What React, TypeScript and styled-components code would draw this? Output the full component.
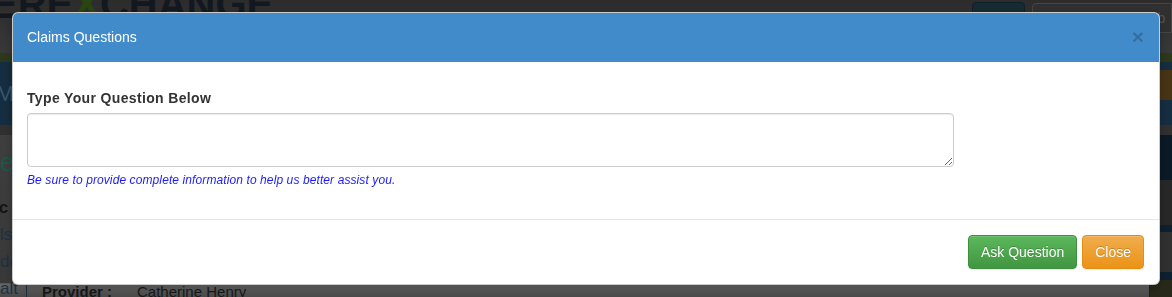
import React from "react";
import styled, { createGlobalStyle } from "styled-components";

const Global = createGlobalStyle`
  html, body { margin: 0; padding: 0; }
  body {
    width: 1172px;
    height: 297px;
    overflow: hidden;
    font-family: "Liberation Sans", Arial, Helvetica, sans-serif;
    font-size: 14px;
    line-height: 1.42857;
    color: #333;
    background: #3a3a3a;
  }
  * { box-sizing: border-box; }
`;

/* ---------- background page (dimmed) ---------- */
const Page = styled.div`
  width: 1172px;
  height: 297px;
  display: flex;
  flex-direction: column;
  overflow: hidden;
`;

const TopBar = styled.header`
  height: 53px;
  flex: none;
  display: flex;
  align-items: flex-start;
  justify-content: space-between;
  background: linear-gradient(#2f2f2f, #3b3b3b);
  overflow: hidden;
`;

const Logo = styled.div`
  font-family: "Liberation Sans", Arial, sans-serif;
  font-weight: 700;
  font-size: 40px;
  letter-spacing: 0;
  line-height: 1;
  margin-top: -16px;
  margin-left: -9px;
  color: #151a22;
`;

const LogoX = styled.span`
  color: #2c4a12;
`;

const TopRight = styled.div`
  display: flex;
  gap: 7px;
  padding-top: 2px;
`;

const DarkBtn = styled.div`
  width: 53px;
  height: 30px;
  border-radius: 4px;
  background: #172d36;
  border: 1px solid #10222a;
`;

const SearchBox = styled.div`
  width: 140px;
  height: 30px;
  margin-top: 1px;
  border: 1px solid #4a4a4a;
  border-radius: 4px 0 0 4px;
  background: #333;
  color: #5a5a5a;
  font-size: 14px;
  padding: 5px 0 0 95px;
  white-space: nowrap;
  overflow: hidden;
`;

const GreenStrip = styled.div`
  height: 9px;
  flex: none;
  background: #2f3b1c;
`;

const Nav = styled.nav`
  height: 63px;
  flex: none;
  display: flex;
  justify-content: space-between;
  background: #173044;
  color: #3d5a70;
  font-size: 22px;
`;

const NavItem = styled.div`
  padding: 16px 0 0 0;
  margin-left: -4px;
`;

const NavTab = styled.div`
  width: 60px;
  margin-top: 8px;
  height: 30px;
  background: #4a3716;
  color: #6a5430;
  padding: 2px 0 0 6px;
`;

const Gap = styled.div`
  height: 10px;
  flex: none;
  background: #333;
`;

const Content = styled.main`
  flex: 1;
  min-height: 0;
  overflow: hidden;
  display: flex;
  background: linear-gradient(#424242 0%, #3c3c3c 91%, #6e6e6e 92%, #4c4c4c 100%);
`;

const SideCol = styled.div`
  width: 27px;
  flex: none;
  border-right: 1px solid #1d3448;
  color: #203446;
  font-size: 17px;
  line-height: 1;
  display: flex;
  flex-direction: column;
  gap: 10px;
  padding-top: 14px;
  overflow: hidden;
  white-space: nowrap;
`;

const SideHead = styled.div`
  color: #1f5a4a;
  font-size: 26px;
  margin-bottom: 14px;
`;

const SideBold = styled.div`
  font-weight: 700;
  color: #151515;
  margin-left: -6px;
`;

const MainCol = styled.div`
  flex: 1;
  display: flex;
  flex-direction: column;
  justify-content: flex-end;
  padding: 0 0 0 15px;
`;

const InfoRow = styled.div`
  display: flex;
  color: #1a1a1a;
  font-size: 15px;
  line-height: 1;
  margin-bottom: -2px;
`;

const InfoLabel = styled.span`
  font-weight: 700;
  width: 95px;
`;

const RightRail = styled.div`
  width: 23px;
  flex: none;
  border-left: 1px solid #102536;
  display: flex;
  flex-direction: column;
`;

const RailBlock = styled.div<{ $h: number; $bg: string }>`
  height: ${(p) => p.$h}px;
  flex: none;
  background: ${(p) => p.$bg};
`;

/* ---------- modal ---------- */
const Overlay = styled.div`
  position: fixed;
  inset: 0;
  padding: 12px 12px 0 12px;
  background: rgba(0, 0, 0, 0.05);
`;

const Dialog = styled.div`
  width: 1148px;
  background: #fff;
  border: 1px solid rgba(0, 0, 0, 0.2);
  border-radius: 6px;
  box-shadow: 0 3px 8px rgba(0, 0, 0, 0.25);
  overflow: hidden;
  display: flex;
  flex-direction: column;
`;

const Header = styled.div`
  height: 50px;
  background: #428bca;
  display: flex;
  align-items: center;
  justify-content: space-between;
  padding: 0 15px 0 14px;
  margin-top: -1px;
`;

const Title = styled.h4`
  margin: 0;
  font-weight: 400;
  font-size: 14px;
  color: #fff;
  line-height: 20px;
`;

const CloseX = styled.button`
  border: 0;
  background: none;
  padding: 0;
  margin-top: -2px;
  font-family: "Liberation Sans", Arial, sans-serif;
  font-size: 21px;
  font-weight: 700;
  line-height: 1;
  color: #000;
  opacity: 0.2;
  cursor: pointer;
`;

const Body = styled.div`
  padding: 26px 14px 30px 14px;
  display: flex;
  flex-direction: column;
`;

const Label = styled.label`
  font-weight: 700;
  font-size: 14px;
  letter-spacing: 0.35px;
  color: #333;
  line-height: 20px;
  margin-bottom: 5px;
`;

const TextArea = styled.textarea`
  width: 927px;
  height: 54px;
  margin: 0;
  padding: 6px 12px;
  border: 1px solid #ccc;
  border-radius: 4px;
  box-shadow: inset 0 1px 1px rgba(0, 0, 0, 0.075);
  font-family: inherit;
  font-size: 14px;
  resize: vertical;
  display: block;
`;

const Help = styled.span`
  margin-top: 5px;
  font-size: 12px;
  letter-spacing: 0.1px;
  line-height: 17px;
  font-style: italic;
  color: #1a1aff;
`;

const Footer = styled.div`
  border-top: 1px solid #e5e5e5;
  padding: 15px;
  display: flex;
  justify-content: flex-end;
  gap: 5px;
`;

const Btn = styled.button<{ $variant: "success" | "warning" }>`
  height: 34px;
  padding: 6px 12px;
  font-family: inherit;
  font-size: 14px;
  line-height: 20px;
  color: #fff;
  border-radius: 4px;
  text-shadow: 0 -1px 0 rgba(0, 0, 0, 0.2);
  box-shadow: inset 0 1px 0 rgba(255, 255, 255, 0.15), 0 1px 1px rgba(0, 0, 0, 0.075);
  cursor: pointer;
  background: ${(p) =>
    p.$variant === "success"
      ? "linear-gradient(#5cb85c, #419641)"
      : "linear-gradient(#f0ad4e, #eb9316)"};
  border: 1px solid ${(p) => (p.$variant === "success" ? "#3e8f3e" : "#e38d13")};
`;

export default function App() {
  return (
    <>
      <Global />
      <Page>
        <TopBar>
          <Logo>
            ERE<LogoX>X</LogoX>CHANGE
          </Logo>
          <TopRight>
            <DarkBtn />
            <SearchBox>Numb</SearchBox>
          </TopRight>
        </TopBar>
        <GreenStrip />
        <Nav>
          <NavItem>My</NavItem>
          <NavTab>C</NavTab>
        </Nav>
        <Gap />
        <Content>
          <SideCol>
            <SideHead>eH</SideHead>
            <SideBold>ic</SideBold>
            <div>ls</div>
            <div>de</div>
            <div>alt</div>
          </SideCol>
          <MainCol>
            <InfoRow>
              <InfoLabel>Provider :</InfoLabel>
              <span>Catherine Henry</span>
            </InfoRow>
          </MainCol>
          <RightRail>
            <RailBlock $h={45} $bg="#0b1b29" />
            <RailBlock $h={45} $bg="#2a2a2a" />
            <RailBlock $h={7} $bg="#0e2234" />
            <RailBlock $h={40} $bg="#333" />
            <RailBlock $h={8} $bg="#0e2234" />
            <RailBlock $h={30} $bg="#2a2a1c" />
          </RightRail>
        </Content>
      </Page>
      <Overlay>
        <Dialog role="dialog" aria-labelledby="cq-title">
          <Header>
            <Title id="cq-title">Claims Questions</Title>
            <CloseX aria-label="Close">×</CloseX>
          </Header>
          <Body>
            <Label htmlFor="cq-text">Type Your Question Below</Label>
            <TextArea id="cq-text" />
            <Help>Be sure to provide complete information to help us better assist you.</Help>
          </Body>
          <Footer>
            <Btn $variant="success">Ask Question</Btn>
            <Btn $variant="warning">Close</Btn>
          </Footer>
        </Dialog>
      </Overlay>
    </>
  );
}
